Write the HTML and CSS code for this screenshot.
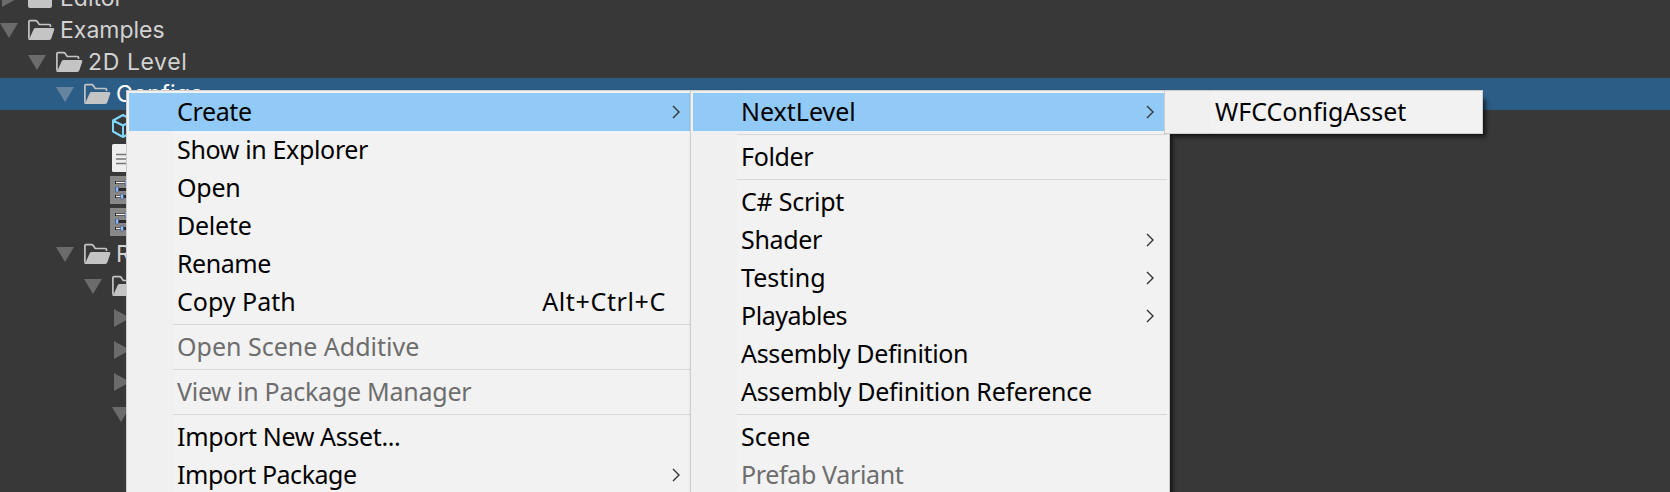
FILE: index.html
```html
<!DOCTYPE html>
<html lang="en">
<head>
<meta charset="utf-8">
<title>Project</title>
<link rel="stylesheet" href="styles.css">
</head>
<body>
<svg class="defs" width="0" height="0">
  <symbol id="down" viewBox="0 0 18 16"><path d="M0 1H18L9 16Z"/></symbol>
  <symbol id="right" viewBox="0 0 16 18"><path d="M0 0V18L16 9Z"/></symbol>
  <symbol id="folder-open" viewBox="0 0 28 22">
    <path d="M1.900 19.500V2.800Q1.900 1.700 2.900 1.700H8.600Q9.600 1.700 10.200 2.500L12.200 5.500H22.500Q23.500 5.500 23.500 6.500V8" fill="none" stroke="currentColor" stroke-width="1.7"/>
    <path d="M8.600 9H26Q27.800 9 27.300 10.600L24.400 19.300Q23.800 21 22.200 21H2.500Q1 21 1.200 19.500L2.500 19.500L6.800 10.100Q7.300 9 8.600 9Z" fill="currentColor"/>
  </symbol>
  <symbol id="folder" viewBox="0 0 28 22"><path d="M3 1H9L12 4H23Q25 4 25 6V19Q25 21 23 21H3Q1 21 1 19V3Q1 1 3 1Z" fill="currentColor"/></symbol>
  <symbol id="cube" viewBox="0 0 24 26"><path d="M2 7.500L12 2L22 7.500V18.500L12 24L2 18.500ZM2 7.500L12 12.500L22 7.500M12 12.500V24" fill="none" stroke="#7fd6fd" stroke-width="2" stroke-linejoin="round"/></symbol>
  <symbol id="doc" viewBox="0 0 24 28"><rect width="24" height="28" rx="1.500" fill="#eee"/><path d="M4 10.500H20M4 15H20M4 19.500H20" stroke="#777" stroke-width="1.700"/></symbol>
  <symbol id="sliders" viewBox="0 0 28 28">
    <rect width="28" height="28" fill="#888"/>
    <path d="M5 6.500H24M5 13.500H24M5 20.500H24" stroke="#2a2a2a" stroke-width="3"/>
    <path d="M6 6.500H15M6 20.500H11" stroke="#eee" stroke-width="1.400"/>
    <path d="M15 3.500H18V9.500H15ZM5.500 11H8.500V16H5.500ZM10.500 18H13.500V23H10.500Z" fill="#8cb8f5" stroke="#446" stroke-width=".5"/>
  </symbol>
  <symbol id="chevron" viewBox="0 0 8 14"><path d="M1 1L7 7L1 13" fill="none" stroke="#333" stroke-width="1.400"/></symbol>
</svg>
<main class="screen">
  <div class="tree">
    <div class="row depth-0"><svg class="arrow-right"><use href="#right"/></svg><svg class="folder"><use href="#folder"/></svg><span>Editor</span></div>
    <div class="row depth-0"><svg class="arrow"><use href="#down"/></svg><svg class="folder"><use href="#folder-open"/></svg><span>Examples</span></div>
    <div class="row depth-1"><svg class="arrow"><use href="#down"/></svg><svg class="folder"><use href="#folder-open"/></svg><span class="level">2D Level</span></div>
    <div class="row depth-2 selected"><svg class="arrow"><use href="#down"/></svg><svg class="folder"><use href="#folder-open"/></svg><span>Configs</span></div>
    <div class="row asset"><svg class="cube"><use href="#cube"/></svg></div>
    <div class="row asset"><svg class="doc"><use href="#doc"/></svg></div>
    <div class="row asset"><svg class="sliders"><use href="#sliders"/></svg></div>
    <div class="row asset"><svg class="sliders"><use href="#sliders"/></svg></div>
    <div class="row depth-2"><svg class="arrow"><use href="#down"/></svg><svg class="folder"><use href="#folder-open"/></svg><span>R</span></div>
    <div class="row depth-3"><svg class="arrow"><use href="#down"/></svg><svg class="folder"><use href="#folder-open"/></svg></div>
    <div class="row depth-4"><svg class="arrow-right"><use href="#right"/></svg></div>
    <div class="row depth-4"><svg class="arrow-right"><use href="#right"/></svg></div>
    <div class="row depth-4"><svg class="arrow-right"><use href="#right"/></svg></div>
    <div class="row depth-4"><svg class="arrow"><use href="#down"/></svg></div>
  </div>

  <div class="menu menu-main">
    <div class="item active tight"><span>Create</span><svg class="chevron"><use href="#chevron"/></svg></div>
    <div class="item tight"><span>Show in Explorer</span></div>
    <div class="item snug"><span>Open</span></div>
    <div class="item snug"><span>Delete</span></div>
    <div class="item tighter"><span>Rename</span></div>
    <div class="item"><span>Copy Path</span><span class="shortcut">Alt+Ctrl+C</span></div>
    <div class="separator"></div>
    <div class="item disabled"><span>Open Scene Additive</span></div>
    <div class="separator"></div>
    <div class="item disabled snug"><span>View in Package Manager</span></div>
    <div class="separator"></div>
    <div class="item tight"><span>Import New Asset...</span></div>
    <div class="item tighter"><span>Import Package</span><svg class="chevron"><use href="#chevron"/></svg></div>
  </div>

  <div class="menu menu-create">
    <div class="item active"><span>NextLevel</span><svg class="chevron"><use href="#chevron"/></svg></div>
    <div class="separator"></div>
    <div class="item tight"><span>Folder</span></div>
    <div class="separator"></div>
    <div class="item snug"><span>C# Script</span></div>
    <div class="item tight"><span>Shader</span><svg class="chevron"><use href="#chevron"/></svg></div>
    <div class="item"><span>Testing</span><svg class="chevron"><use href="#chevron"/></svg></div>
    <div class="item tighter"><span>Playables</span><svg class="chevron"><use href="#chevron"/></svg></div>
    <div class="item tight"><span>Assembly Definition</span></div>
    <div class="item snug"><span>Assembly Definition Reference</span></div>
    <div class="separator"></div>
    <div class="item"><span>Scene</span></div>
    <div class="item disabled tight"><span>Prefab Variant</span></div>
  </div>

  <div class="menu menu-next">
    <div class="item"><span>WFCConfigAsset</span></div>
  </div>
</main>
</body>
</html>
```
FILE: styles.css
```css
* { box-sizing: border-box; }
body { margin: 0; background: #383838; }
.defs { position: absolute; }
.screen { display: flow-root; position: relative; width: 1670px; height: 492px; overflow: hidden; background: #383838; }
.tree { margin-top: -18px; font: 23px/32px Inter, sans-serif; color: #d2d2d2; }
.row { display: flex; height: 32px; align-items: center; white-space: nowrap; }
.row span { padding-bottom: 1px; }
.row .level { letter-spacing: .6px; padding-bottom: 0; }
.row svg { flex: none; }
.depth-0 { padding-left: 0; }
.depth-1 { padding-left: 28px; }
.depth-2 { padding-left: 56px; }
.depth-3 { padding-left: 84px; }
.depth-4 { padding-left: 112px; }
.selected { background: #2c5d87; color: #fff; letter-spacing: .35px; }
.arrow { width: 18px; height: 16px; fill: #6b6b6b; }
.selected .arrow { fill: #6684a0; }
.arrow-right { width: 16px; height: 18px; margin: 0 0 0 2px; fill: #6b6b6b; }
.folder { width: 28px; height: 22px; margin-left: 9px; margin-right: 5px; color: #c4c4c4; }
.asset { padding-left: 110px; }
.cube { width: 24px; height: 26px; margin-left: 1px; }
.doc { width: 24px; height: 28px; margin-left: 2px; }
.sliders { width: 28px; height: 28px; }

.menu {
  position: absolute; top: 90px; padding: 2px;
  border: 1px solid #ccc;
  background: linear-gradient(90deg, #f0f0f0 46px, #f2f2f2 46px);
  font: 25px/36px "Noto Sans", sans-serif; color: #000;
}
.menu-main { left: 126px; width: 580px; }
.menu-create { left: 690px; width: 480px; box-shadow: 3px 3px 4px rgba(0, 0, 0, .6); }
.menu-next { left: 1164px; width: 319px; box-shadow: 6px 6px 4px -3px rgba(0, 0, 0, .6); }
.item { display: flex; height: 38px; align-items: center; padding-left: 48px; white-space: nowrap; }
.item span { padding-bottom: 2px; }
.snug { letter-spacing: -.25px; }
.tight { letter-spacing: -.35px; }
.tighter { letter-spacing: -.47px; }
.active { background: #91c9f7; }
.disabled { color: #6d6d6d; }
.separator { height: 7px; padding: 3px 0; margin-left: 44px; background: #d7d7d7 content-box; }
.shortcut { margin-left: auto; margin-right: 37px; letter-spacing: .64px; }
.chevron { width: 8px; height: 14px; margin-left: auto; margin-right: 13px; }
.menu-main .chevron { margin-right: 23px; }
```
